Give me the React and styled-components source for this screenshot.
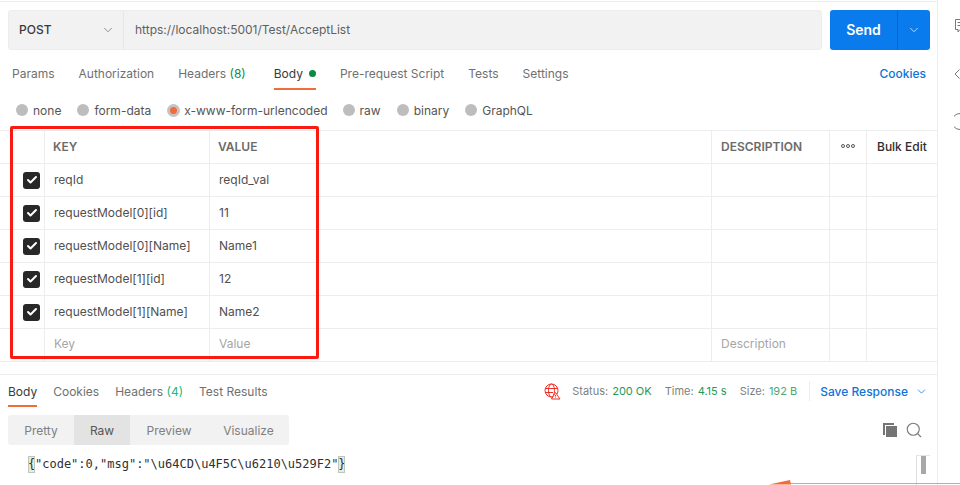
import React from 'react';
import styled, { createGlobalStyle } from 'styled-components';
import { ChevronDown, Search, Check } from 'lucide-react';

const Global = createGlobalStyle`
  html, body {
    margin: 0;
    padding: 0;
    background: #fff;
    overflow: hidden;
  }
  * {
    box-sizing: border-box;
  }
`;

const Page = styled.div`
  position: relative;
  display: flex;
  width: 960px;
  height: 485px;
  overflow: hidden;
  font-family: Inter, 'Liberation Sans', sans-serif;
  font-size: 12px;
  color: #6b6b6b;
`;

const Main = styled.div`
  width: 938px;
  height: 485px;
  padding-top: 1px;
  border-right: 1px solid #ededed;
  display: flex;
  flex-direction: column;
`;

const TopLine = styled.div`
  height: 1px;
  background: #ededed;
`;

const UrlRow = styled.div`
  display: flex;
  gap: 8px;
  padding: 8px 7px 0 8px;
`;

const UrlBox = styled.div`
  flex: 1;
  height: 40px;
  display: flex;
  background: #f2f2f2;
  border: 1px solid #ededed;
  border-radius: 3px;
`;

const Method = styled.div`
  width: 115px;
  padding: 0 8px 1px 10px;
  display: flex;
  align-items: center;
  justify-content: space-between;
  border-right: 1px solid #e6e6e6;
  font-weight: 500;
  color: #3a3a3a;
`;

const Url = styled.div`
  flex: 1;
  display: flex;
  align-items: center;
  padding: 0 0 2px 11px;
  font-size: 12px;
  color: #5f5f5f;
`;

const SendButton = styled.div`
  width: 100px;
  height: 40px;
  display: flex;
  background: #097bed;
  border-radius: 3px;
  color: #fff;
`;

const SendLabel = styled.div`
  flex: 1;
  display: flex;
  align-items: center;
  justify-content: center;
  padding-bottom: 2px;
  font-size: 14px;
  font-weight: 600;
  border-right: 1px solid #0768c9;
`;

const SendArrow = styled.div`
  width: 32px;
  display: flex;
  align-items: center;
  justify-content: center;
`;

const RequestTabs = styled.div`
  height: 34px;
  margin-top: 6px;
  padding: 0 12px;
  display: flex;
  align-items: stretch;
  gap: 24px;
`;

const Tab = styled.div`
  display: flex;
  align-items: center;
  gap: 4px;
  margin-right: ${({ $after }) => $after ?? 0}px;
  color: ${({ $active }) => ($active ? '#3a3a3a' : '#707070')};
  border-bottom: 2px solid ${({ $active }) => ($active ? '#f26b3a' : 'transparent')};
  padding-top: 2px;
`;

const Count = styled.span`
  color: ${({ $light }) => ($light ? '#26b47f' : '#0f8a4b')};
`;

const Dot = styled.span`
  width: 7px;
  height: 7px;
  margin-left: 2px;
  border-radius: 50%;
  background: #0b8a44;
`;

const CookiesLink = styled.div`
  margin-left: auto;
  margin-right: -1px;
  display: flex;
  align-items: center;
  color: #0f73d8;
  font-weight: 500;
`;

const RadioRow = styled.div`
  height: 40px;
  padding-left: 16px;
  display: flex;
  align-items: center;
  color: #555;
`;

const RadioItem = styled.div`
  display: flex;
  align-items: center;
  gap: ${({ $on }) => ($on ? 4 : 5)}px;
  margin-right: ${({ $on }) => ($on ? 15 : 16)}px;
`;

const Radio = styled.span`
  width: ${({ $on }) => ($on ? 13 : 12)}px;
  height: ${({ $on }) => ($on ? 13 : 12)}px;
  border-radius: 50%;
  background: ${({ $on }) => ($on ? '#f26b3a' : '#bdbdbd')};
  border: ${({ $on }) => ($on ? '3px solid #c4c4c4' : 'none')};
`;

const Table = styled.div`
  border-top: 1px solid #ededed;
`;

const Row = styled.div`
  height: 33px;
  display: grid;
  grid-template-columns: 45px 165px 502px 118px 37px 1fr;
  border-bottom: 1px solid #ededed;
`;

const Cell = styled.div`
  display: flex;
  align-items: center;
  padding-left: ${({ $pad }) => $pad ?? 9}px;
  padding-bottom: ${({ $muted }) => ($muted ? 4 : 2)}px;
  border-right: ${({ $last }) => ($last ? 'none' : '1px solid #ededed')};
  color: ${({ $muted }) => ($muted ? '#a6a6a6' : '#505050')};
`;

const HeadCell = styled(Cell)`
  font-weight: 600;
  color: #6b6b6b;
`;

const BulkEdit = styled(Cell)`
  font-weight: 500;
  color: #2e2e2e;
  padding-left: 10px;
`;

const MoreDots = styled(Cell)`
  padding-left: 11px;
  gap: 1px;
`;

const SmallRing = styled.span`
  width: 4px;
  height: 4px;
  border: 1px solid #555;
  border-radius: 50%;
`;

const CheckCell = styled(Cell)`
  padding: 0 0 0 23px;
`;

const CheckBox = styled.span`
  width: 17px;
  height: 17px;
  display: flex;
  align-items: center;
  justify-content: center;
  background: #282828;
  border-radius: 3px;
  color: #fff;
`;

const Response = styled.div`
  margin-top: 12px;
  border-top: 1px solid #ededed;
  flex: 1;
  position: relative;
`;

const ResponseBar = styled.div`
  height: 32px;
  padding: 0 8px;
  display: flex;
  align-items: stretch;
  gap: 16px;
`;

const StatusGroup = styled.div`
  margin-left: auto;
  display: flex;
  align-items: center;
  font-size: 11px;
  color: #808080;
`;

const Stat = styled.span`
  margin-left: ${({ $first }) => ($first ? 11 : 13)}px;
`;

const StatValue = styled.span`
  color: ${({ $light }) => ($light ? '#4aa874' : '#1f9a58')};
  margin-left: 4px;
`;

const SaveResponse = styled.div`
  margin-left: 12px;
  padding: 0 1px 0 10px;
  height: 20px;
  display: flex;
  align-items: center;
  gap: 7px;
  border-left: 1px solid #ededed;
  color: #0f73d8;
  font-size: 12px;
  font-weight: 500;
`;

const ViewRow = styled.div`
  margin-top: 8px;
  padding: 0 14px 0 8px;
  display: flex;
  align-items: center;
  justify-content: space-between;
`;

const ViewTabs = styled.div`
  display: flex;
  height: 30px;
  background: #f2f2f2;
  border-radius: 3px;
  overflow: hidden;
`;

const ViewTab = styled.div`
  display: flex;
  align-items: center;
  justify-content: center;
  width: ${({ $w }) => $w}px;
  background: ${({ $active }) => ($active ? '#e3e3e3' : 'transparent')};
  color: ${({ $active }) => ($active ? '#555' : '#808080')};
`;

const Tools = styled.div`
  display: flex;
  align-items: center;
  gap: 7px;
  color: #7c7c7c;
`;

const Code = styled.div`
  margin-top: 10px;
  padding-left: 28px;
  display: flex;
  align-items: center;
  font-family: 'DejaVu Sans Mono', 'Liberation Mono', monospace;
  font-size: 12px;
  color: #303030;
  height: 18px;
`;

const Brace = styled.span`
  background: #e6ebe4;
  border: 1px solid #bfc7bd;
  line-height: 15px;
  width: 7px;
  display: flex;
  justify-content: center;
  overflow: hidden;
`;

const CodeScroll = styled.div`
  position: absolute;
  left: 916px;
  top: 80px;
  width: 14px;
  height: 30px;
  border-left: 1px solid #ddd;
  border-top: 1px solid #e6e6e6;
  &::after {
    content: '';
    position: absolute;
    left: 4px;
    top: 0;
    width: 5px;
    height: 18px;
    background: #a8a8a8;
  }
`;

const Side = styled.div`
  flex: 1;
  position: relative;
`;

const SideIcon = styled.svg`
  position: absolute;
  left: ${({ $left }) => $left}px;
  top: ${({ $top }) => $top}px;
`;

const RedBox = styled.div`
  position: absolute;
  left: 10px;
  top: 126px;
  width: 309px;
  height: 233px;
  border: 3px solid #fb1a10;
  border-radius: 2px;
  pointer-events: none;
`;

const ArrowLine = styled.svg`
  position: absolute;
  left: 760px;
  top: 475px;
`;

const GlobeWarning = () => (
  <svg width="17" height="17" viewBox="0 0 17 17" fill="none" stroke="#ee2f25" strokeWidth="1">
    <circle cx="7.5" cy="7.5" r="6.5" />
    <ellipse cx="7.5" cy="7.5" rx="3" ry="6.5" />
    <path d="M1 5.5h13M1 9.5h8" />
    <path d="M11.5 9.5 16 16H7.5z" fill="#fff" />
    <path d="M11.5 12v1.5M11.5 14.500v.5" />
  </svg>
);

const CopyIcon = () => (
  <svg width="15" height="15" viewBox="0 0 15 15" fill="#757575">
    <path d="M0 0h11v2H2v10H0z" />
    <rect x="3" y="3" width="11" height="11" />
  </svg>
);

const radios = ['none', 'form-data', 'x-www-form-urlencoded', 'raw', 'binary', 'GraphQL'];

const rows = [
  ['reqId', 'reqId_val'],
  ['requestModel[0][id]', '11'],
  ['requestModel[0][Name]', 'Name1'],
  ['requestModel[1][id]', '12'],
  ['requestModel[1][Name]', 'Name2'],
];

const App = () => (
  <Page>
    <Global />
    <Main>
      <TopLine />
      <UrlRow>
        <UrlBox>
          <Method>
            POST
            <ChevronDown size={14} strokeWidth={1.2} color="#666" />
          </Method>
          <Url>https://localhost:5001/Test/AcceptList</Url>
        </UrlBox>
        <SendButton>
          <SendLabel>Send</SendLabel>
          <SendArrow>
            <ChevronDown size={14} strokeWidth={1.2} />
          </SendArrow>
        </SendButton>
      </UrlRow>
      <RequestTabs>
        <Tab>Params</Tab>
        <Tab>Authorization</Tab>
        <Tab $after={4}>
          <span>
            Headers <Count>(8)</Count>
          </span>
        </Tab>
        <Tab $active>
          Body <Dot />
        </Tab>
        <Tab>Pre-request Script</Tab>
        <Tab>Tests</Tab>
        <Tab>Settings</Tab>
        <CookiesLink>Cookies</CookiesLink>
      </RequestTabs>
      <RadioRow>
        {radios.map((r) => {
          const on = r === 'x-www-form-urlencoded';
          return (
            <RadioItem key={r} $on={on}>
              <Radio $on={on} />
              {r}
            </RadioItem>
          );
        })}
      </RadioRow>
      <Table>
        <Row>
          <Cell />
          <HeadCell $pad={8}>KEY</HeadCell>
          <HeadCell $pad={8}>VALUE</HeadCell>
          <HeadCell>DESCRIPTION</HeadCell>
          <MoreDots>
            <SmallRing />
            <SmallRing />
            <SmallRing />
          </MoreDots>
          <BulkEdit $last>Bulk Edit</BulkEdit>
        </Row>
        {rows.map(([k, v]) => (
          <Row key={k}>
            <CheckCell>
              <CheckBox>
                <Check size={12} strokeWidth={4} />
              </CheckBox>
            </CheckCell>
            <Cell>{k}</Cell>
            <Cell>{v}</Cell>
            <Cell />
            <Cell />
            <Cell $last />
          </Row>
        ))}
        <Row>
          <Cell />
          <Cell $muted>Key</Cell>
          <Cell $muted>Value</Cell>
          <Cell $muted>Description</Cell>
          <Cell />
          <Cell $last />
        </Row>
      </Table>
      <Response>
        <ResponseBar>
          <Tab $active>Body</Tab>
          <Tab>Cookies</Tab>
          <Tab>
            <span>
              Headers <Count $light>(4)</Count>
            </span>
          </Tab>
          <Tab>Test Results</Tab>
          <StatusGroup>
            <GlobeWarning />
            <Stat $first>
              Status:<StatValue>200 OK</StatValue>
            </Stat>
            <Stat>
              Time:<StatValue>4.15 s</StatValue>
            </Stat>
            <Stat>
              Size:<StatValue $light>192 B</StatValue>
            </Stat>
            <SaveResponse>
              Save Response
              <ChevronDown size={13} strokeWidth={1.4} />
            </SaveResponse>
          </StatusGroup>
        </ResponseBar>
        <ViewRow>
          <ViewTabs>
            <ViewTab $w={66}>Pretty</ViewTab>
            <ViewTab $w={56} $active>
              Raw
            </ViewTab>
            <ViewTab $w={78}>Preview</ViewTab>
            <ViewTab $w={81}>Visualize</ViewTab>
          </ViewTabs>
          <Tools>
            <CopyIcon />
            <Search size={18} strokeWidth={1.5} />
          </Tools>
        </ViewRow>
        <Code>
          <Brace>{'{'}</Brace>
          {'"code":0,"msg":"\\u64CD\\u4F5C\\u6210\\u529F2"'}
          <Brace>{'}'}</Brace>
        </Code>
        <CodeScroll />
      </Response>
    </Main>
    <Side>
      <SideIcon $left={17} $top={19} width="5" height="14" viewBox="0 0 5 14" fill="none" stroke="#777">
        <path d="M5 .5H.5v10H3V13l2-2.500M2.500 3.500H5M2.500 6.500H5" />
      </SideIcon>
      <SideIcon $left={16} $top={69} width="6" height="10" viewBox="0 0 6 10" fill="none" stroke="#777">
        <path d="M5.500.5 1 5l4.500 4.500" />
      </SideIcon>
      <SideIcon $left={16} $top={113} width="6" height="17" viewBox="0 0 6 17" fill="none" stroke="#777">
        <path d="M6 .5a8 8 0 0 0 0 16" />
      </SideIcon>
    </Side>
    <RedBox />
    <ArrowLine width="200" height="10" viewBox="0 0 200 10">
      <path d="M30 8.500h170" stroke="#b0aeb4" strokeWidth="1" />
      <path d="M9 9.500 30 5l1 4.500z" fill="#f26b3a" />
    </ArrowLine>
  </Page>
);

export default App;
